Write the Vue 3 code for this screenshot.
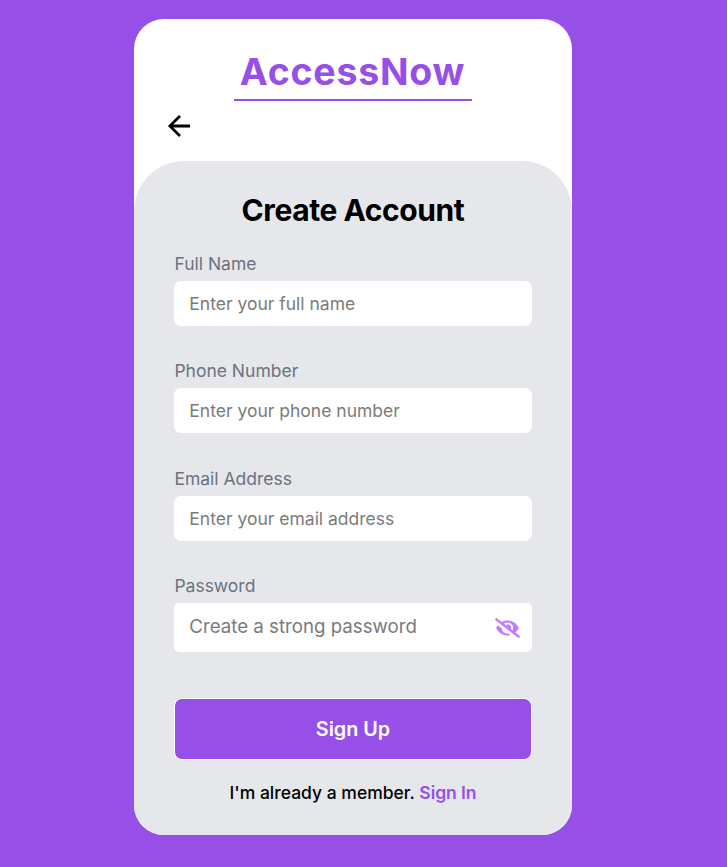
<script setup>
const fields = [
  { id: 'name', label: 'Full Name', type: 'text', placeholder: 'Enter your full name' },
  { id: 'phone', label: 'Phone Number', type: 'tel', placeholder: 'Enter your phone number' },
  { id: 'email', label: 'Email Address', type: 'email', placeholder: 'Enter your email address' },
]
</script>

<template>
  <main class="page">
    <section class="card">
      <header class="header">
        <h1 class="brand">AccessNow</h1>
        <a class="back" aria-label="Back">
          <svg viewBox="-8 -8 528 528" width="34" height="34">
            <path d="M427 234.625H167.296l119.702-119.702L256 85 85 256l171 171 29.922-29.924-118.626-119.701H427v-42.75z" />
          </svg>
        </a>
      </header>
      <form class="panel" @submit.prevent>
        <h2 class="title">Create Account</h2>
        <div class="fields">
          <div v-for="f in fields" :key="f.id" class="field">
            <label :for="f.id">{{ f.label }}</label>
            <input :id="f.id" :type="f.type" :placeholder="f.placeholder" />
          </div>
          <div class="field">
            <label for="password">Password</label>
            <div class="password">
              <input id="password" type="password" placeholder="Create a strong password" />
              <svg class="eye" viewBox="0 0 640 512" width="25" height="20">
                <path d="M320 400c-75.85 0-137.25-58.71-142.9-133.11L72.2 185.82c-13.79 17.3-26.48 35.59-36.72 55.59a32.35 32.35 0 0 0 0 29.19C89.71 376.41 197.07 448 320 448c26.91 0 52.87-4 77.89-10.46L346 397.39a144.13 144.13 0 0 1-26 2.61zm313.82 58.1l-110.55-85.44a331.25 331.25 0 0 0 81.25-102.07 32.35 32.35 0 0 0 0-29.19C550.29 135.59 442.93 64 320 64a308.15 308.15 0 0 0-147.32 37.7L45.46 3.37A16 16 0 0 0 23 6.18L3.37 31.45A16 16 0 0 0 6.18 53.9l588.36 454.73a16 16 0 0 0 22.46-2.81l19.64-25.27a16 16 0 0 0-2.82-22.45zm-183.72-142l-39.3-30.38A94.75 94.75 0 0 0 416 256a94.76 94.76 0 0 0-121.31-92.21A47.65 47.65 0 0 1 304 192a46.64 46.64 0 0 1-1.54 10l-73.61-56.89A142.31 142.31 0 0 1 320 112a143.92 143.92 0 0 1 144 144c0 21.63-5.29 41.79-13.9 60.11z" />
              </svg>
            </div>
          </div>
        </div>
        <button class="submit" type="submit">Sign Up</button>
        <p class="member">I'm already a member. <a>Sign In</a></p>
      </form>
    </section>
  </main>
</template>

<style>
body {
  background: #9650e8;
}
</style>

<style scoped>
.page {
  box-sizing: border-box;
  height: 867px;
  padding: 19px 155px 32px 134px;
  background: #9650e8;
  font-family: Inter, sans-serif;
}
.card {
  display: flex;
  flex-direction: column;
  height: 816px;
  border-radius: 30px;
  background: #fff;
  overflow: hidden;
}
.header {
  display: flex;
  flex-direction: column;
  height: 142px;
}
.brand {
  box-sizing: border-box;
  align-self: center;
  width: 238px;
  height: 82px;
  margin: 0;
  padding: 30px 1px 0 0;
  border-bottom: 2px solid #9650e8;
  color: #9650e8;
  font-size: 37.5px;
  line-height: 46px;
  font-weight: 700;
  letter-spacing: 0.75px;
  text-align: center;
}
.back {
  width: 34px;
  height: 34px;
  margin: 8px 0 0 28px;
}
.back svg,
.eye {
  display: block;
}
.panel {
  display: flex;
  flex: 1;
  flex-direction: column;
  padding: 0 40px;
  border-radius: 50px 50px 0 0;
  background: #e5e7eb;
}
.title {
  margin: 31px 0 0;
  color: #000;
  font-size: 30px;
  line-height: 36px;
  font-weight: 700;
  letter-spacing: -0.42px;
  text-align: center;
}
.fields {
  display: flex;
  flex-direction: column;
  gap: 32.4px;
  margin-top: 23px;
}
.field {
  display: flex;
  flex-direction: column;
}
.field label {
  height: 30px;
  padding-left: 0.4px;
  color: #6b7280;
  font-size: 17.5px;
  line-height: 26px;
}
.field input {
  box-sizing: border-box;
  width: 100%;
  height: 45px;
  padding: 0 15.3px;
  border: 0;
  border-radius: 7px;
  background: #fff;
  font-family: inherit;
  font-size: 17.5px;
}
.field input::placeholder {
  color: #7b7b7b;
}
.password {
  display: flex;
  align-items: center;
  height: 49px;
  padding-right: 12.3px;
  border-radius: 5px;
  background: #fff;
}
.password input {
  flex: 1;
  min-width: 0;
  padding-bottom: 2px;
  font-size: 18.7px;
}
.eye {
  fill: #c27aff;
}
.submit {
  height: 62px;
  margin-top: 46px;
  border: 1px solid #fff;
  border-radius: 8px;
  background: #9650e8;
  color: #fff;
  font-family: inherit;
  font-size: 19.8px;
  font-weight: 600;
}
.member {
  margin: 22px 0 0;
  font-size: 17.5px;
  line-height: 22px;
  font-weight: 500;
  text-align: center;
}
.member a {
  color: #9650e8;
  font-weight: 600;
  letter-spacing: -0.05px;
}
</style>
